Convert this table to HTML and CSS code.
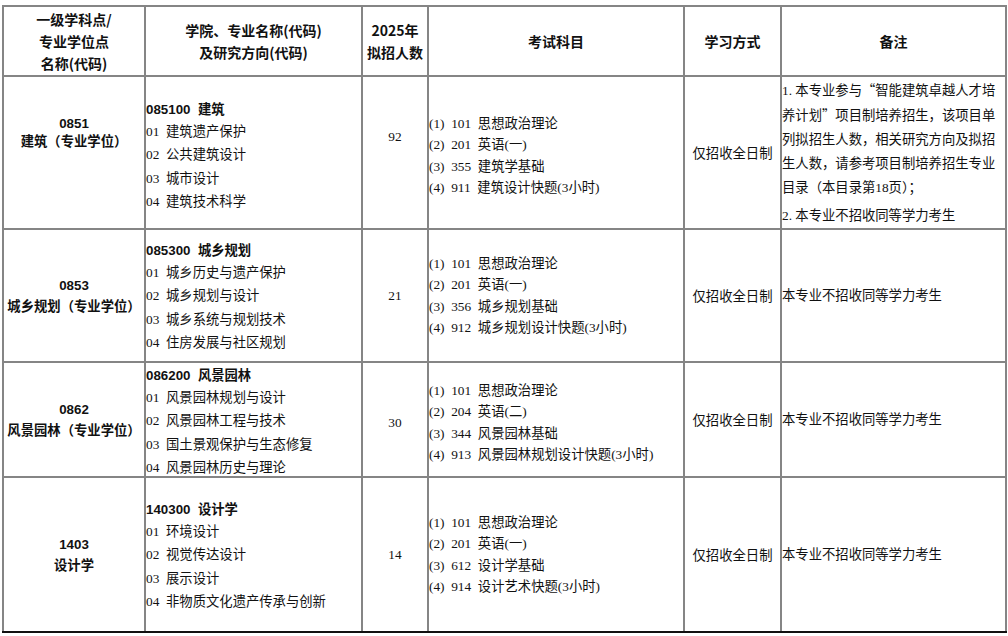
FILE: index.html
```html
<!DOCTYPE html>
<html lang="zh">
<head>
<meta charset="utf-8">
<link rel="stylesheet" href="styles.css">
</head>
<body>
<table class="catalog">
  <colgroup>
    <col class="c1"><col class="c2"><col class="c3"><col class="c4"><col class="c5"><col class="c6">
  </colgroup>
  <thead>
    <tr class="head">
      <th class="h1">一级学科点/<br>专业学位点<br>名称(代码)</th>
      <th class="h2">学院、专业名称(代码)<br>及研究方向(代码)</th>
      <th class="h3">2025年<br>拟招人数</th>
      <th>考试科目</th>
      <th>学习方式</th>
      <th>备注</th>
    </tr>
  </thead>
  <tbody>
    <tr class="r1">
      <td class="disc"><b>0851</b><br><b>建筑（专业学位）</b></td>
      <td class="major"><div class="block"><div class="mtitle">085100&nbsp;&nbsp;建筑</div>
        <div>01&nbsp;&nbsp;建筑遗产保护</div><div>02&nbsp;&nbsp;公共建筑设计</div><div>03&nbsp;&nbsp;城市设计</div><div>04&nbsp;&nbsp;建筑技术科学</div></div></td>
      <td class="num">92</td>
      <td class="exam"><div class="block"><div>(1)&nbsp;&nbsp;101&nbsp;&nbsp;思想政治理论</div><div>(2)&nbsp;&nbsp;201&nbsp;&nbsp;英语(一)</div><div>(3)&nbsp;&nbsp;355&nbsp;&nbsp;建筑学基础</div><div>(4)&nbsp;&nbsp;911&nbsp;&nbsp;建筑设计快题(3小时)</div></div></td>
      <td class="mode">仅招收全日制</td>
      <td class="note"><p class="p1">1.&nbsp;本专业参与<span class="q">“</span>智能建筑卓越人才培<br>养计划<span class="q">”</span>项目制培养招生，该项目单<br>列拟招生人数，相关研究方向及拟招<br>生人数，请参考项目制培养招生专业<br>目录（本目录第18页）；</p><p class="p2">2.&nbsp;本专业不招收同等学力考生</p></td>
    </tr>
    <tr class="r2">
      <td class="disc"><b>0853</b><br><b>城乡规划（专业学位）</b></td>
      <td class="major"><div class="block"><div class="mtitle">085300&nbsp;&nbsp;城乡规划</div>
        <div>01&nbsp;&nbsp;城乡历史与遗产保护</div><div>02&nbsp;&nbsp;城乡规划与设计</div><div>03&nbsp;&nbsp;城乡系统与规划技术</div><div>04&nbsp;&nbsp;住房发展与社区规划</div></div></td>
      <td class="num">21</td>
      <td class="exam"><div class="block"><div>(1)&nbsp;&nbsp;101&nbsp;&nbsp;思想政治理论</div><div>(2)&nbsp;&nbsp;201&nbsp;&nbsp;英语(一)</div><div>(3)&nbsp;&nbsp;356&nbsp;&nbsp;城乡规划基础</div><div>(4)&nbsp;&nbsp;912&nbsp;&nbsp;城乡规划设计快题(3小时)</div></div></td>
      <td class="mode">仅招收全日制</td>
      <td class="note">本专业不招收同等学力考生</td>
    </tr>
    <tr class="r3">
      <td class="disc"><b>0862</b><br><b>风景园林（专业学位）</b></td>
      <td class="major"><div class="block"><div class="mtitle">086200&nbsp;&nbsp;风景园林</div>
        <div>01&nbsp;&nbsp;风景园林规划与设计</div><div>02&nbsp;&nbsp;风景园林工程与技术</div><div>03&nbsp;&nbsp;国土景观保护与生态修复</div><div>04&nbsp;&nbsp;风景园林历史与理论</div></div></td>
      <td class="num">30</td>
      <td class="exam"><div class="block"><div>(1)&nbsp;&nbsp;101&nbsp;&nbsp;思想政治理论</div><div>(2)&nbsp;&nbsp;204&nbsp;&nbsp;英语(二)</div><div>(3)&nbsp;&nbsp;344&nbsp;&nbsp;风景园林基础</div><div>(4)&nbsp;&nbsp;913&nbsp;&nbsp;风景园林规划设计快题(3小时)</div></div></td>
      <td class="mode">仅招收全日制</td>
      <td class="note">本专业不招收同等学力考生</td>
    </tr>
    <tr class="r4">
      <td class="disc"><b>1403</b><br><b>设计学</b></td>
      <td class="major"><div class="block"><div class="mtitle">140300&nbsp;&nbsp;设计学</div>
        <div>01&nbsp;&nbsp;环境设计</div><div>02&nbsp;&nbsp;视觉传达设计</div><div>03&nbsp;&nbsp;展示设计</div><div>04&nbsp;&nbsp;非物质文化遗产传承与创新</div></div></td>
      <td class="num">14</td>
      <td class="exam"><div class="block"><div>(1)&nbsp;&nbsp;101&nbsp;&nbsp;思想政治理论</div><div>(2)&nbsp;&nbsp;201&nbsp;&nbsp;英语(一)</div><div>(3)&nbsp;&nbsp;612&nbsp;&nbsp;设计学基础</div><div>(4)&nbsp;&nbsp;914&nbsp;&nbsp;设计艺术快题(3小时)</div></div></td>
      <td class="mode">仅招收全日制</td>
      <td class="note">本专业不招收同等学力考生</td>
    </tr>
  </tbody>
</table>
</body>
</html>
```

FILE: styles.css
```css
html, body {
  margin: 0;
  padding: 0;
  background: #ffffff;
}
body {
  padding: 5px 0 0 2px;
  font-family: "Liberation Serif", "Noto Sans CJK SC", serif;
  font-size: 13.33px;
  color: #111;
}
.catalog {
  border-collapse: collapse;
  table-layout: fixed;
  width: 1003px;
}
.c1 { width: 142px; }
.c2 { width: 217px; }
.c3 { width: 66px; }
.c4 { width: 256px; }
.c5 { width: 97px; }
.c6 { width: 225px; }

.catalog th, .catalog td {
  border: 2px solid #858585;
  padding: 0;
  vertical-align: middle;
}
.catalog tbody tr.r4 td {
  border-bottom: 2px solid #111;
}
.catalog th {
  font-family: "Noto Sans CJK SC", "Liberation Sans", sans-serif;
  font-weight: 700;
  font-size: 14px;
  line-height: 22px;
  text-align: center;
  color: #111;
}
.head { height: 70px; }
.r1 { height: 153px; }
.r2 { height: 133px; }
.r3 { height: 115px; }
.r4 { height: 155px; }

.disc {
  text-align: center;
  font-family: "Liberation Sans", "Noto Sans CJK SC", sans-serif;
  line-height: 21px;
}
.disc b { font-weight: 700; }
.r1 .disc {
  line-height: 18px;
  padding-bottom: 40px;
}
.major {
  padding-left: 1px;
  line-height: 23.3px;
}
.mtitle {
  font-family: "Liberation Sans", "Noto Sans CJK SC", sans-serif;
  font-weight: 700;
  line-height: 20px;
}
.r1 .major .block { margin: 4px 0 -4px; }
.r2 .major .block { margin: 2px 0 -2px; }
.r3 .major .block { margin: 3px 0 -3px; }
.r4 .major .block { margin: 2px 0 -2px; }
.num { text-align: center; }
.r1 .num { padding-bottom: 32px; }
.r3 .num { padding-top: 6px; }
.exam {
  padding-left: 1px;
  line-height: 21.3px;
}
.r1 .exam .block, .r3 .exam .block { margin: 3px 0 -3px; }
.mode { text-align: center; }
.note {
  padding-left: 1px;
  line-height: 24px;
}
.note p { margin: 0; }
.note .p2 { margin-top: 4px; }
.q {
  font-family: "Noto Sans CJK SC", sans-serif;
}
```
